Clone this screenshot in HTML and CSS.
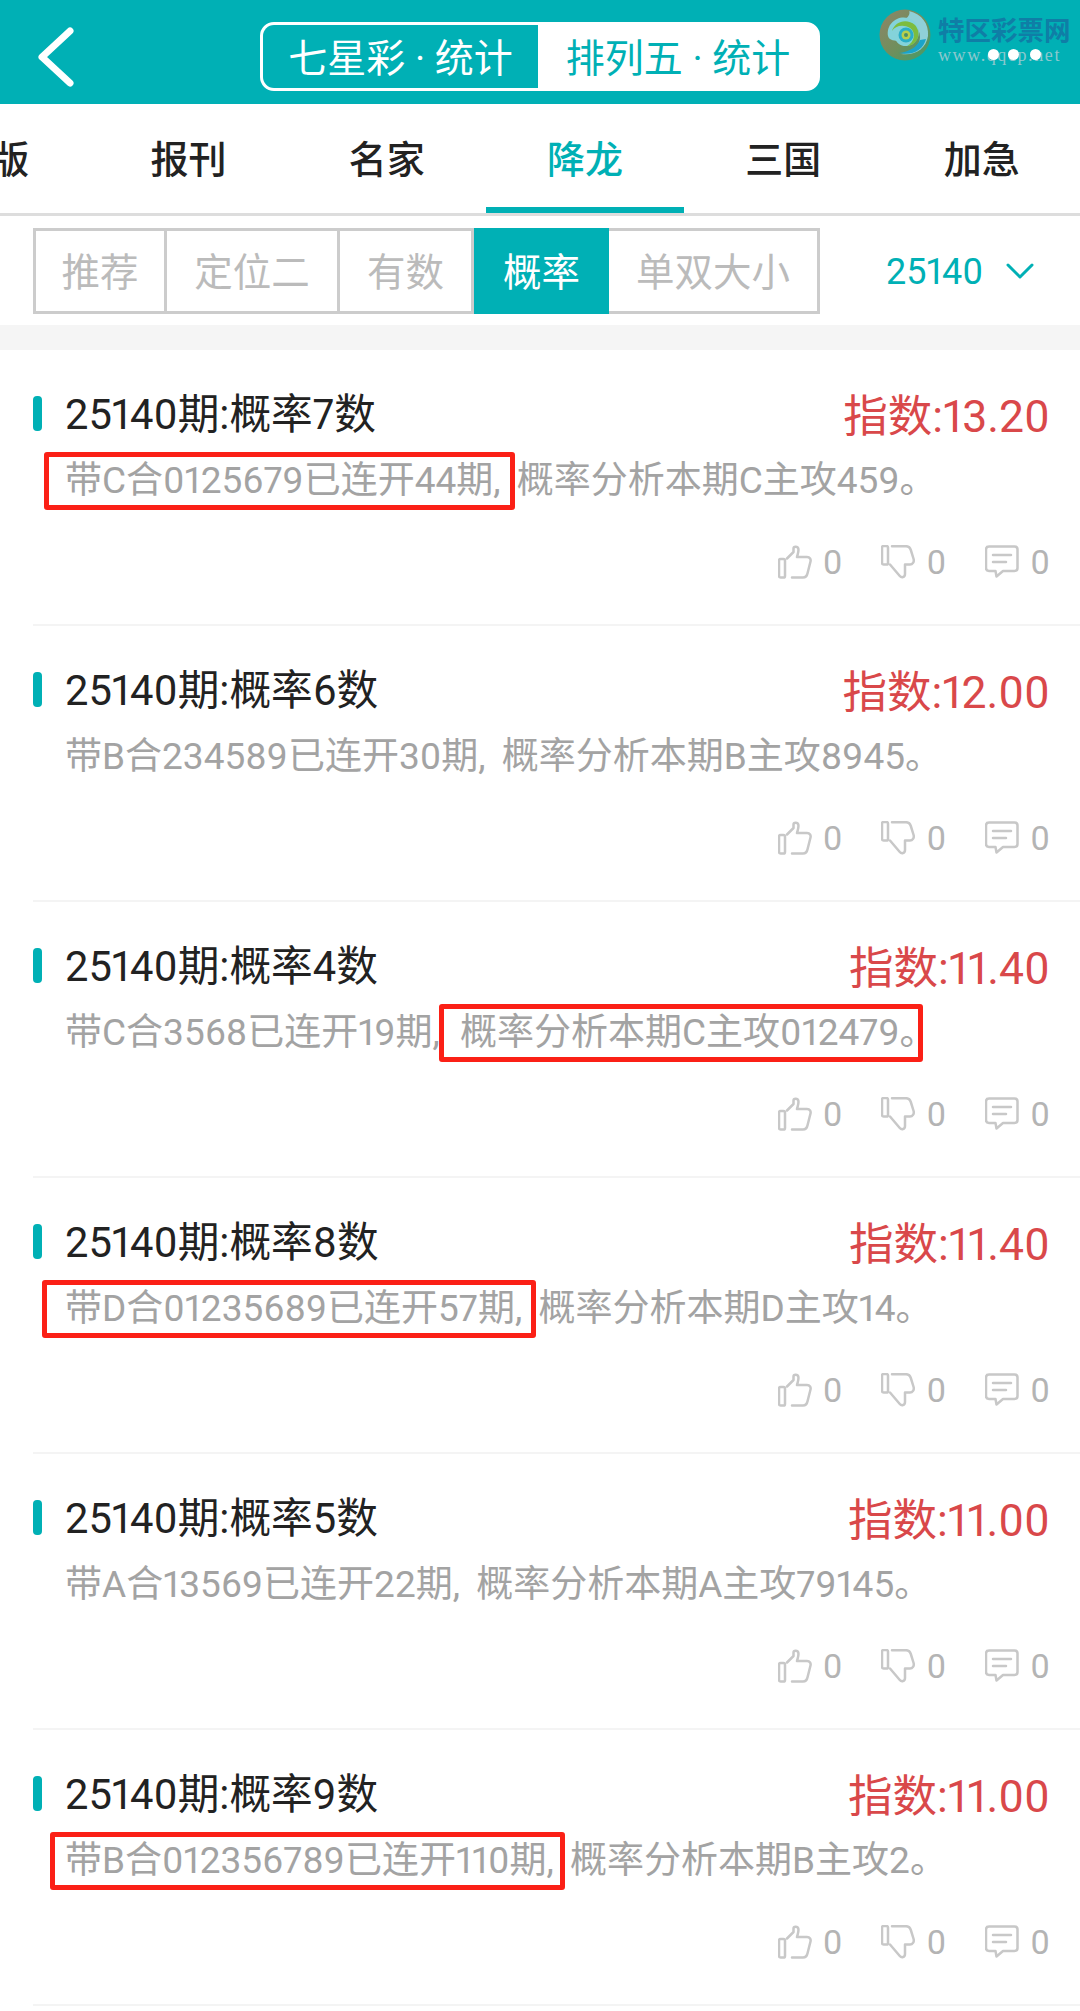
FILE: index.html
```html
<!DOCTYPE html>
<html lang="zh-CN">
<head>
  <meta charset="UTF-8">
  <title>概率统计</title>
  <link rel="stylesheet" href="styles.css">
</head>
<body>
  <svg class="defs" width="0" height="0">
    <symbol id="i-up" viewBox="0 0 34 34">
      <path d="M9 13.5 15.5 7V3.5C15.5 1.5 19.5 .8 20.3 3.6 21 6.5 19.5 9.5 19 12H29C32 12 33 14.5 32.5 16.5L29.6 28C29 31 27.5 32.5 25 32.5H14"/>
      <rect x="1" y="14" width="6" height="18.5" rx="1.6"/>
    </symbol>
    <symbol id="i-down" viewBox="0 0 34 34">
      <rect x="1" y="1" width="6" height="18.5" rx="1.6"/>
      <path d="M11 1.2H25C27.5 1.200 29 2.500 29.800 5L32.600 14C33.400 17 31.500 19.500 29 19.500H24V29C24 32.500 20.500 33 18.800 31L9 19.500"/>
    </symbol>
    <symbol id="i-talk" viewBox="0 0 34 34">
      <path d="M4 1.500H29.500C31.500 1.500 32.500 2.500 32.500 4.500V23C32.500 25 31.500 26 29.500 26H18L11.500 31.500 10.500 26H4C2 26 1 25 1 23V4.500C1 2.500 2 1.500 4 1.500Z"/>
      <path d="M8 10H26M8 17H21"/>
    </symbol>
  </svg>

  <header class="topbar">
    <svg class="back" width="44" height="68" viewBox="0 0 44 68"><path d="M36 8 8 34 36 60"/></svg>
    <div class="seg">
      <div class="seg-item active">七星彩 · 统计</div>
      <div class="seg-item">排列五 · 统计</div>
    </div>
    <div class="watermark">
      <svg class="wm-logo" width="52" height="52" viewBox="0 0 52 52">
        <defs>
          <linearGradient id="wm-a" x1="0" y1="0" x2="1" y2="1">
            <stop offset="0" stop-color="#8f8468"/>
            <stop offset=".55" stop-color="#6f8f5c"/>
            <stop offset="1" stop-color="#3f9c6a"/>
          </linearGradient>
        </defs>
        <circle cx="26" cy="26" r="25.500" fill="url(#wm-a)"/>
        <path d="M30 2C43 5 50 15 49 27 47 40 36 47 22 45 32 44 41 38 41 28 41 18 33 11 24 12 33 6 30 2 30 2Z" fill="#8fd0d8"/>
        <path d="M47 30C44 41 34 47 20 44 30 43 38 38 41 31Z" fill="#1aa4c9"/>
        <path d="M9 27C7 15 18 6 29 9 40 12 44 26 35 34 28 40 17 37 16 28 15 20 24 15 30 19 36 24 33 32 27 32 23 32 21 28 24 26 21 26 20 30 22 33 16 31 10 32 9 27Z" fill="#84d3da"/>
        <path d="M13 22C16 12 28 9 36 16 43 24 39 36 28 37 36 33 37 23 31 19 24 15 16 17 13 22Z" fill="#7cbc3f"/>
        <circle cx="27" cy="26" r="7.500" fill="#2aaec8"/>
        <circle cx="27" cy="26" r="4.500" fill="#b7cf4d"/>
        <circle cx="27" cy="26" r="2" fill="#4a8f6a"/>
      </svg>
      <div class="wm-text">
        <div class="wm-name">特区彩票网</div>
        <div class="wm-url">www.qqcp.net<i class="dot d1"></i><i class="dot d2"></i><i class="dot d3"></i></div>
      </div>
    </div>
  </header>

  <nav class="tabs">
    <a>版</a>
    <a>报刊</a>
    <a>名家</a>
    <a class="active">降龙</a>
    <a>三国</a>
    <a>加急</a>
  </nav>

  <div class="filter">
    <div class="cells">
      <div class="cell w1">推荐</div>
      <div class="cell w2">定位二</div>
      <div class="cell w1">有数</div>
      <div class="cell w1 active">概率</div>
      <div class="cell w3">单双大小</div>
    </div>
    <div class="issue">
      <span>25140</span>
      <svg width="28" height="16" viewBox="0 0 28 16"><path d="M2 2 14 14 26 2"/></svg>
    </div>
  </div>

  <div class="band"></div>

  <ul class="list">
    <li class="item">
      <div class="item-head">
        <div class="item-title">25140期:概率7数</div>
        <div class="item-score">指数:13.20</div>
      </div>
      <p class="desc"><span class="mark m1">带C合0125679已连开44期,</span> 概率分析本期C主攻459。</p>
      <div class="acts">
        <svg class="ic"><use href="#i-up"/></svg><span>0</span>
        <svg class="ic"><use href="#i-down"/></svg><span>0</span>
        <svg class="ic"><use href="#i-talk"/></svg><span>0</span>
      </div>
    </li>
    <li class="item">
      <div class="item-head">
        <div class="item-title">25140期:概率6数</div>
        <div class="item-score">指数:12.00</div>
      </div>
      <p class="desc">带B合234589已连开30期, 概率分析本期B主攻8945。</p>
      <div class="acts">
        <svg class="ic"><use href="#i-up"/></svg><span>0</span>
        <svg class="ic"><use href="#i-down"/></svg><span>0</span>
        <svg class="ic"><use href="#i-talk"/></svg><span>0</span>
      </div>
    </li>
    <li class="item">
      <div class="item-head">
        <div class="item-title">25140期:概率4数</div>
        <div class="item-score">指数:11.40</div>
      </div>
      <p class="desc">带C合3568已连开19期, <span class="mark m2">概率分析本期C主攻012479。</span></p>
      <div class="acts">
        <svg class="ic"><use href="#i-up"/></svg><span>0</span>
        <svg class="ic"><use href="#i-down"/></svg><span>0</span>
        <svg class="ic"><use href="#i-talk"/></svg><span>0</span>
      </div>
    </li>
    <li class="item">
      <div class="item-head">
        <div class="item-title">25140期:概率8数</div>
        <div class="item-score">指数:11.40</div>
      </div>
      <p class="desc"><span class="mark m3">带D合01235689已连开57期,</span> 概率分析本期D主攻14。</p>
      <div class="acts">
        <svg class="ic"><use href="#i-up"/></svg><span>0</span>
        <svg class="ic"><use href="#i-down"/></svg><span>0</span>
        <svg class="ic"><use href="#i-talk"/></svg><span>0</span>
      </div>
    </li>
    <li class="item">
      <div class="item-head">
        <div class="item-title">25140期:概率5数</div>
        <div class="item-score">指数:11.00</div>
      </div>
      <p class="desc">带A合13569已连开22期, 概率分析本期A主攻79145。</p>
      <div class="acts">
        <svg class="ic"><use href="#i-up"/></svg><span>0</span>
        <svg class="ic"><use href="#i-down"/></svg><span>0</span>
        <svg class="ic"><use href="#i-talk"/></svg><span>0</span>
      </div>
    </li>
    <li class="item">
      <div class="item-head">
        <div class="item-title">25140期:概率9数</div>
        <div class="item-score">指数:11.00</div>
      </div>
      <p class="desc"><span class="mark m4">带B合012356789已连开110期,</span> 概率分析本期B主攻2。</p>
      <div class="acts">
        <svg class="ic"><use href="#i-up"/></svg><span>0</span>
        <svg class="ic"><use href="#i-down"/></svg><span>0</span>
        <svg class="ic"><use href="#i-talk"/></svg><span>0</span>
      </div>
    </li>
  </ul>
</body>
</html>
```

FILE: styles.css
```css
* {
  box-sizing: border-box;
}
body {
  margin: 0;
  background: #fff;
  font-family: Roboto, "Noto Sans CJK SC", sans-serif;
  font-variant-numeric: proportional-nums;
  overflow: hidden;
}
.defs {
  position: absolute;
}

/* top bar */
.topbar {
  position: relative;
  height: 104px;
  background: #00b0b5;
  display: flex;
  align-items: center;
  justify-content: center;
}
.back {
  position: absolute;
  left: 34px;
  top: 23px;
}
.back path {
  fill: none;
  stroke: #fff;
  stroke-width: 7;
  stroke-linecap: round;
  stroke-linejoin: round;
}
.seg {
  display: flex;
  width: 560px;
  height: 69px;
  margin-top: 9px;
  border: 3px solid #fff;
  border-radius: 14px;
  overflow: hidden;
  background: #fff;
}
.seg-item {
  flex: 1;
  display: flex;
  align-items: center;
  justify-content: center;
  padding: 0 0 3px 1px;
  font-size: 39px;
  color: #00b0b5;
}
.seg-item.active {
  flex: 0 0 275px;
  padding-left: 0;
  background: #00b0b5;
  color: #fff;
}
.watermark {
  position: absolute;
  left: 879px;
  top: 9px;
  display: flex;
  gap: 7px;
}
.wm-name {
  margin-top: 7px;
  font-size: 26.500px;
  line-height: 30px;
  font-weight: 700;
  color: #0f7ea6;
  white-space: nowrap;
}
.wm-url {
  position: relative;
  margin-top: 1px;
  font-family: "Liberation Serif", serif;
  font-size: 18px;
  line-height: 16px;
  letter-spacing: 1.600px;
  color: #8cc8ce;
  white-space: nowrap;
}
.dot {
  position: absolute;
  top: 2px;
  width: 11px;
  height: 11px;
  border-radius: 50%;
  background: #fff;
}
.d1 { left: 50px; }
.d2 { left: 70px; }
.d3 { left: 92px; }

/* channel tabs */
.tabs {
  display: flex;
  height: 112px;
  margin-left: -109px;
  border-bottom: 3px solid #ddd;
}
.tabs a {
  flex: 0 0 198.300px;
  height: 112px;
  padding-top: 33px;
  text-align: center;
  font-size: 38px;
  line-height: 46px;
  font-weight: 500;
  color: #222;
}
.tabs a:first-child {
  padding-right: 60px;
  text-align: right;
}
.tabs a.active {
  color: #00b0b5;
  border-bottom: 6px solid #00b0b5;
  height: 109px;
}

/* filter row */
.filter {
  display: flex;
  align-items: center;
  height: 109px;
  padding-left: 33px;
}
.cells {
  display: flex;
  height: 86px;
}
.cell {
  display: flex;
  align-items: center;
  justify-content: center;
  margin-left: -3px;
  padding-bottom: 3px;
  border: 3px solid #ccc;
  font-size: 38.500px;
  color: #bbb;
}
.cell.w1 { width: 137px; }
.cell.w2 { width: 176px; }
.cell.w3 { width: 214px; }
.cell:first-child {
  width: 134px;
  margin-left: 0;
}
.cell.active {
  width: 135px;
  margin-left: 0;
  background: #00b0b5;
  border-color: #00b0b5;
  color: #fff;
  position: relative;
}
.issue {
  display: flex;
  align-items: center;
  gap: 23px;
  margin-left: 66px;
  font-size: 36px;
  color: #00b0b5;
}
.issue span {
  padding-top: 2px;
}
.issue path {
  fill: none;
  stroke: #00b0b5;
  stroke-width: 3;
  stroke-linecap: round;
  stroke-linejoin: round;
}
.band {
  height: 25px;
  background: #f5f5f5;
}

/* list */
.list {
  margin: 0;
  padding: 0 0 0 33px;
  list-style: none;
}
.item {
  height: 276px;
  padding: 40px 30px 0 0;
  border-bottom: 2px solid #f4f4f4;
}
.item-head {
  display: flex;
  justify-content: space-between;
  align-items: flex-start;
  height: 46px;
}
.item-title {
  position: relative;
  padding-left: 32px;
  font-size: 41.700px;
  line-height: 50px;
  color: #222;
}
.item-title::before {
  content: "";
  position: absolute;
  left: 0;
  top: 6px;
  width: 9px;
  height: 35px;
  border-radius: 4px;
  background: #00b0b5;
}
.item-score {
  font-size: 44.500px;
  line-height: 55px;
  color: #d9484a;
}
.desc {
  margin: 20px 0 0;
  padding-left: 32px;
  font-size: 37px;
  line-height: 50px;
  word-spacing: 7px;
  color: #a3a3a3;
  white-space: nowrap;
}
.mark {
  position: relative;
}
.mark::after {
  content: "";
  position: absolute;
  border: 5px solid #fb2016;
  border-radius: 3px;
}
.m1::after { left: -21px; right: -14px; top: -7px; bottom: -8px; }
.m2 { margin-left: 4px; }
.m2::after { left: -21px; right: 14px; top: -7px; bottom: -8px; }
.m3::after { left: -23px; right: -14px; top: -7px; bottom: -8px; }
.m4::after { left: -15px; right: -11px; top: -7px; bottom: -8px; }
.acts {
  display: flex;
  justify-content: flex-end;
  align-items: center;
  height: 40px;
  margin-top: 36px;
  font-size: 34px;
  color: #b4b4b4;
}
.acts .ic {
  width: 34px;
  height: 34px;
  margin-left: 39px;
  margin-right: 11px;
  fill: none;
  stroke: #c8c8c8;
  stroke-width: 2.500;
  stroke-linecap: round;
  stroke-linejoin: round;
}
.acts .ic:first-child {
  margin-left: 0;
}
```
